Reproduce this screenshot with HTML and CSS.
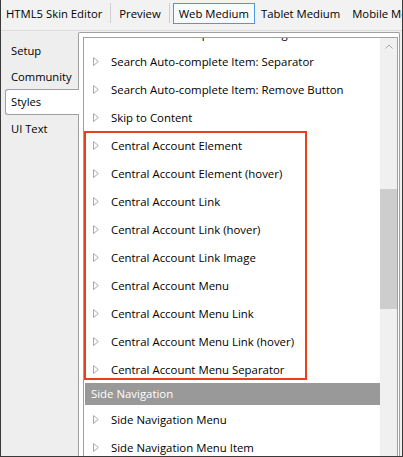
FILE: index.html
```html
<!DOCTYPE html>
<html>
<head>
<meta charset="utf-8">
<link rel="stylesheet" href="styles.css">
</head>
<body>
<div class="window">
  <div class="toolbar">
    <span class="tb">HTML5 Skin Editor</span>
    <span class="tb-sep"></span>
    <span class="tb">Preview</span>
    <span class="tb-sep"></span>
    <span class="tb tb-active">Web Medium</span>
    <span class="tb">Tablet Medium</span>
    <span class="tb">Mobile Medium</span>
  </div>
  <div class="main">
    <div class="tabs">
      <div class="tab">Setup</div>
      <div class="tab">Community</div>
      <div class="tab tab-sel">Styles</div>
      <div class="tab">UI Text</div>
    </div>
    <div class="panel">
      <div class="list">
        <div class="list-content">
          <div class="rows">
            <div class="row"><svg viewBox="0 0 6 9"><path d="M0.5 0.5 L5.3 4.5 L0.5 8.5 Z"/></svg><span>Search Auto-complete Item: Image</span></div>
            <div class="row"><svg viewBox="0 0 6 9"><path d="M0.5 0.5 L5.3 4.5 L0.5 8.5 Z"/></svg><span>Search Auto-complete Item: Separator</span></div>
            <div class="row"><svg viewBox="0 0 6 9"><path d="M0.5 0.5 L5.3 4.5 L0.5 8.5 Z"/></svg><span>Search Auto-complete Item: Remove Button</span></div>
            <div class="row"><svg viewBox="0 0 6 9"><path d="M0.5 0.5 L5.3 4.5 L0.5 8.5 Z"/></svg><span>Skip to Content</span></div>
            <div class="row"><svg viewBox="0 0 6 9"><path d="M0.5 0.5 L5.3 4.5 L0.5 8.5 Z"/></svg><span>Central Account Element</span></div>
            <div class="row"><svg viewBox="0 0 6 9"><path d="M0.5 0.5 L5.3 4.5 L0.5 8.5 Z"/></svg><span>Central Account Element (hover)</span></div>
            <div class="row"><svg viewBox="0 0 6 9"><path d="M0.5 0.5 L5.3 4.5 L0.5 8.5 Z"/></svg><span>Central Account Link</span></div>
            <div class="row"><svg viewBox="0 0 6 9"><path d="M0.5 0.5 L5.3 4.5 L0.5 8.5 Z"/></svg><span>Central Account Link (hover)</span></div>
            <div class="row"><svg viewBox="0 0 6 9"><path d="M0.5 0.5 L5.3 4.5 L0.5 8.5 Z"/></svg><span>Central Account Link Image</span></div>
            <div class="row"><svg viewBox="0 0 6 9"><path d="M0.5 0.5 L5.3 4.5 L0.5 8.5 Z"/></svg><span>Central Account Menu</span></div>
            <div class="row"><svg viewBox="0 0 6 9"><path d="M0.5 0.5 L5.3 4.5 L0.5 8.5 Z"/></svg><span>Central Account Menu Link</span></div>
            <div class="row"><svg viewBox="0 0 6 9"><path d="M0.5 0.5 L5.3 4.5 L0.5 8.5 Z"/></svg><span>Central Account Menu Link (hover)</span></div>
            <div class="row"><svg viewBox="0 0 6 9"><path d="M0.5 0.5 L5.3 4.5 L0.5 8.5 Z"/></svg><span>Central Account Menu Separator</span></div>
            <div class="group">Side Navigation</div>
            <div class="row"><svg viewBox="0 0 6 9"><path d="M0.5 0.5 L5.3 4.5 L0.5 8.5 Z"/></svg><span>Side Navigation Menu</span></div>
            <div class="row"><svg viewBox="0 0 6 9"><path d="M0.5 0.5 L5.3 4.5 L0.5 8.5 Z"/></svg><span>Side Navigation Menu Item</span></div>
          </div>
          <div class="highlight"></div>
        </div>
        <div class="scrollbar">
          <div class="sb-up"><svg viewBox="0 0 8 5"><path d="M0.5 4.5 L4 1 L7.5 4.5"/></svg></div>
          <div class="sb-thumb"></div>
        </div>
      </div>
    </div>
  </div>
</div>
</body>
</html>
```
FILE: styles.css
```css
html, body {
  margin: 0;
  padding: 0;
  background: #f0f0f0;
}
body {
  font-family: "Open Sans", "Noto Sans", sans-serif;
  font-size: 11px;
  color: #000;
}
.window {
  width: 403px;
  height: 457px;
  box-sizing: border-box;
  border: 1px solid #3a3a3a;
  border-top: none;
  overflow: hidden;
  display: flex;
  flex-direction: column;
  background: #f0f0f0;
}
.toolbar {
  height: 27px;
  padding-top: 3px;
  border-bottom: 1px solid #dadada;
  display: flex;
  align-items: flex-start;
  white-space: nowrap;
  overflow: hidden;
  flex-shrink: 0;
  background: #f2f2f2;
  font-size: 11.3px;
}
.tb {
  height: 21px;
  box-sizing: border-box;
  border: 1px solid transparent;
  padding: 0 5px;
  line-height: 19px;
  flex-shrink: 0;
}
.tb:first-child {
  padding-left: 4px;
}
.tb-active {
  border-color: #4d97e3;
  background: #f8fafd;
  margin-left: 1px;
}
.tb-sep {
  width: 1px;
  height: 20px;
  background: #cfcfcf;
  margin: 0 2px;
  flex-shrink: 0;
}
.main {
  flex: 1;
  display: flex;
  padding-top: 1px;
  min-height: 0;
}
.tabs {
  width: 77px;
  flex-shrink: 0;
  padding-top: 6px;
  background: #eeeeee;
  font-size: 11.2px;
}
.tab {
  height: 26px;
  line-height: 26px;
  padding-left: 10px;
}
.tab-sel {
  position: relative;
  z-index: 1;
  margin: -1px -1px 1px 4px;
  padding-left: 5px;
  box-sizing: border-box;
  height: 26px;
  line-height: 24px;
  background: #fff;
  border: 1px solid #a0a0a0;
  border-right: none;
  border-radius: 3px 0 0 3px;
}
.panel {
  width: 322px;
  box-sizing: border-box;
  border: 1px solid #a0a0a0;
  border-bottom: none;
  border-radius: 2px 2px 0 0;
  background: #fff;
  padding: 4px 1px 0 4px;
  flex-shrink: 0;
}
.list {
  display: flex;
  height: 100%;
  box-sizing: border-box;
  border: 1px solid #a0a0a0;
  border-bottom: none;
  overflow: hidden;
}
.list-content {
  flex: 1;
  position: relative;
  overflow: hidden;
  font-size: 11.4px;
}
.rows {
  margin-top: -19px;
}
.row {
  height: 28px;
  display: flex;
  align-items: center;
  padding-left: 9px;
  white-space: nowrap;
}
.row svg {
  width: 6px;
  height: 9px;
  margin-right: 12px;
  flex-shrink: 0;
}
.row svg path {
  fill: #fff;
  stroke: #a8a8a8;
  stroke-width: 1;
}
.group {
  height: 22px;
  line-height: 22px;
  background: #999999;
  color: #fff;
  margin-left: 1px;
  padding-left: 6px;
}
.highlight {
  position: absolute;
  left: 0;
  top: 93px;
  width: 223px;
  height: 249px;
  box-sizing: border-box;
  border: 2px solid #e4421d;
}
.scrollbar {
  width: 17px;
  flex-shrink: 0;
  background: #f0f0f0;
  display: flex;
  flex-direction: column;
}
.sb-up {
  height: 17px;
  display: flex;
  align-items: center;
  justify-content: center;
}
.sb-up svg {
  width: 8px;
  height: 5px;
}
.sb-up svg path {
  fill: none;
  stroke: #a6a6a6;
  stroke-width: 1;
}
.sb-thumb {
  margin-top: 134px;
  height: 120px;
  background: #cdcdcd;
}
```
